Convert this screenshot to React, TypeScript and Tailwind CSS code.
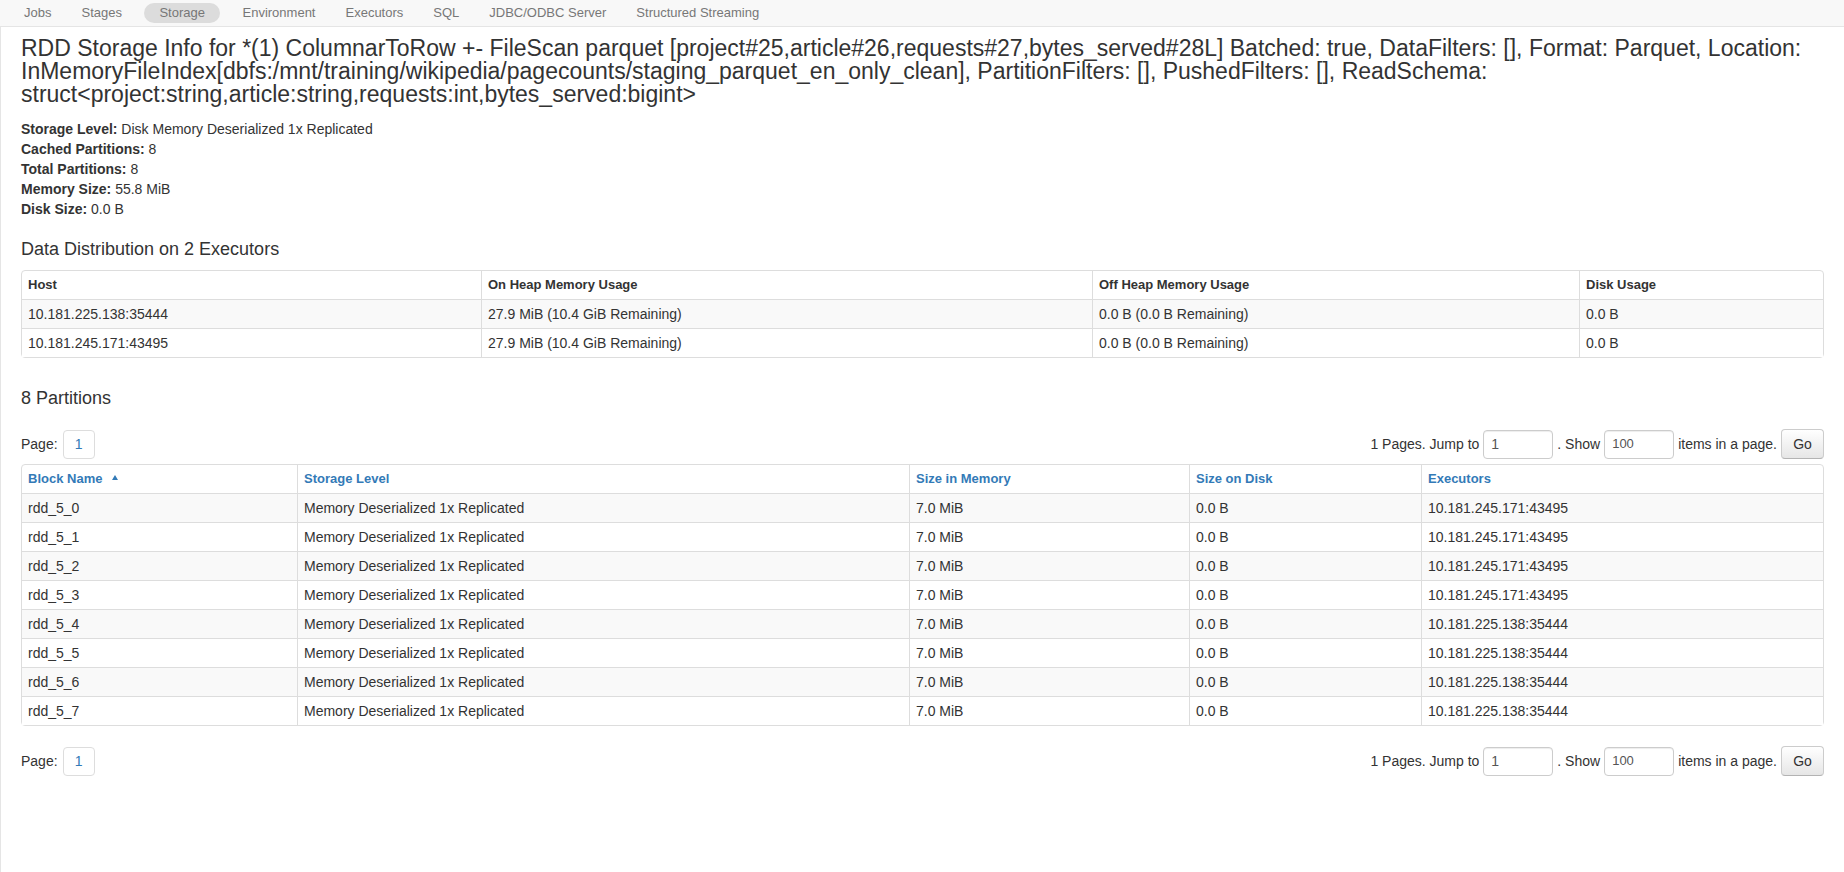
import type React from 'react';

const navItems = ['Jobs', 'Stages', 'Storage', 'Environment', 'Executors', 'SQL', 'JDBC/ODBC Server', 'Structured Streaming'];

const executors = [
  { host: '10.181.225.138:35444', onHeap: '27.9 MiB (10.4 GiB Remaining)', offHeap: '0.0 B (0.0 B Remaining)', disk: '0.0 B' },
  { host: '10.181.245.171:43495', onHeap: '27.9 MiB (10.4 GiB Remaining)', offHeap: '0.0 B (0.0 B Remaining)', disk: '0.0 B' },
];

const partitions = [0, 1, 2, 3, 4, 5, 6, 7].map((i) => ({
  name: `rdd_5_${i}`,
  level: 'Memory Deserialized 1x Replicated',
  memory: '7.0 MiB',
  disk: '0.0 B',
  executor: i < 4 ? '10.181.245.171:43495' : '10.181.225.138:35444',
}));

const th = 'h-[28px] px-[6px] text-left align-middle text-[13px] font-bold';
const td = 'h-[29px] px-[6px] text-left align-middle text-[14px] border-t border-[#ddd]';

const Pagination: React.FC = () => {
  return (
    <div className="flex items-center justify-between h-[30px] text-[14px] text-[#333]">
      <div className="flex items-center gap-[5px]">
        <span>Page:</span>
        <span className="flex items-center justify-center w-[32px] h-[29px] border border-[#ddd] rounded-[4px] bg-white text-[#337ab7]">1</span>
      </div>
      <div className="flex items-center gap-[4px]">
        <span>1 Pages. Jump to</span>
        <span className="flex items-center w-[70px] h-[29px] px-[7px] border border-[#ccc] rounded-[4px] bg-white text-[#555] shadow-[inset_0_1px_1px_rgba(0,0,0,0.075)]">1</span>
        <span>. Show</span>
        <span className="flex items-center w-[70px] h-[29px] px-[7px] border border-[#ccc] rounded-[4px] bg-white text-[#555] text-[13px] shadow-[inset_0_1px_1px_rgba(0,0,0,0.075)]">100</span>
        <span>items in a page.</span>
        <button className="w-[43px] h-[30px] border border-[#ccc] border-b-[#b3b3b3] rounded-[4px] bg-gradient-to-b from-white to-[#e6e6e6] text-[#333] text-[14px]">Go</button>
      </div>
    </div>
  );
};

export default function App() {
  return (
    <div className="min-h-screen bg-white font-['Liberation_Sans',Arial,sans-serif] text-[#333]">
      {/* NAV */}
      <div className="flex items-center h-[27px] pl-[9px] bg-[#f8f8f8] border-b border-[#e5e5e5] text-[13px] text-[#777]">
        {navItems.map((item) =>
          item === 'Storage' ? (
            <span key={item} className="mx-[7.5px] px-[15px] h-[20px] leading-[20px] rounded-full bg-[#dcdcdc] text-[#777]">
              {item}
            </span>
          ) : (
            <span key={item} className="px-[15px]">{item}</span>
          )
        )}
      </div>

      <div className="border-l border-[#e5e5e5] px-[20px] pb-[40px] min-h-[845px]">
        {/* TITLE */}
        <h3 className="pt-[10px] text-[23px] leading-[23px] font-normal text-[#333]">
          RDD Storage Info for *(1) ColumnarToRow +- FileScan parquet [project#25,article#26,requests#27,bytes_served#28L] Batched: true, DataFilters: [], Format: Parquet, Location: InMemoryFileIndex[dbfs:/mnt/training/wikipedia/pagecounts/staging_parquet_en_only_clean], PartitionFilters: [], PushedFilters: [], ReadSchema: struct&lt;project:string,article:string,requests:int,bytes_served:bigint&gt;
        </h3>

        <ul className="mt-[13px] text-[14px] leading-[20px]">
          <li><strong>Storage Level:</strong> Disk Memory Deserialized 1x Replicated</li>
          <li><strong>Cached Partitions:</strong> 8</li>
          <li><strong>Total Partitions:</strong> 8</li>
          <li><strong>Memory Size:</strong> 55.8 MiB</li>
          <li><strong>Disk Size:</strong> 0.0 B</li>
        </ul>

        {/* EXECUTORS */}
        <h4 className="mt-[20px] text-[18px] leading-[20px] font-normal">Data Distribution on 2 Executors</h4>
        <table className="mt-[11px] w-full table-fixed border-separate border-spacing-0 border border-[#ddd] rounded-[4px]">
          <colgroup>
            <col className="w-[459px]" />
            <col className="w-[611px]" />
            <col className="w-[487px]" />
            <col />
          </colgroup>
          <thead>
            <tr>
              <th className={th}>Host</th>
              <th className={`${th} border-l border-[#ddd]`}>On Heap Memory Usage</th>
              <th className={`${th} border-l border-[#ddd]`}>Off Heap Memory Usage</th>
              <th className={`${th} border-l border-[#ddd]`}>Disk Usage</th>
            </tr>
          </thead>
          <tbody>
            {executors.map((e, i) => (
              <tr key={e.host} className={i % 2 === 0 ? 'bg-[#f9f9f9]' : 'bg-white'}>
                <td className={td}>{e.host}</td>
                <td className={`${td} border-l`}>{e.onHeap}</td>
                <td className={`${td} border-l`}>{e.offHeap}</td>
                <td className={`${td} border-l`}>{e.disk}</td>
              </tr>
            ))}
          </tbody>
        </table>

        {/* PARTITIONS */}
        <h4 className="mt-[30px] text-[18px] leading-[20px] font-normal">8 Partitions</h4>
        <div className="mt-[21px]">
          <Pagination />
        </div>
        <table className="mt-[5px] w-full table-fixed border-separate border-spacing-0 border border-[#ddd] rounded-[4px]">
          <colgroup>
            <col className="w-[275px]" />
            <col className="w-[612px]" />
            <col className="w-[280px]" />
            <col className="w-[232px]" />
            <col />
          </colgroup>
          <thead>
            <tr className="text-[#337ab7]">
              <th className={th}>
                Block Name
                <span className="inline-block ml-[10px] align-middle w-0 h-0 border-x-[3.5px] border-x-transparent border-b-[5px] border-b-[#337ab7] relative -top-[2px]"></span>
              </th>
              <th className={`${th} border-l border-[#ddd]`}>Storage Level</th>
              <th className={`${th} border-l border-[#ddd]`}>Size in Memory</th>
              <th className={`${th} border-l border-[#ddd]`}>Size on Disk</th>
              <th className={`${th} border-l border-[#ddd]`}>Executors</th>
            </tr>
          </thead>
          <tbody>
            {partitions.map((p, i) => (
              <tr key={p.name} className={i % 2 === 0 ? 'bg-[#f9f9f9]' : 'bg-white'}>
                <td className={td}>{p.name}</td>
                <td className={`${td} border-l`}>{p.level}</td>
                <td className={`${td} border-l`}>{p.memory}</td>
                <td className={`${td} border-l`}>{p.disk}</td>
                <td className={`${td} border-l`}>{p.executor}</td>
              </tr>
            ))}
          </tbody>
        </table>
        <div className="mt-[20px]">
          <Pagination />
        </div>
      </div>
    </div>
  );
}
